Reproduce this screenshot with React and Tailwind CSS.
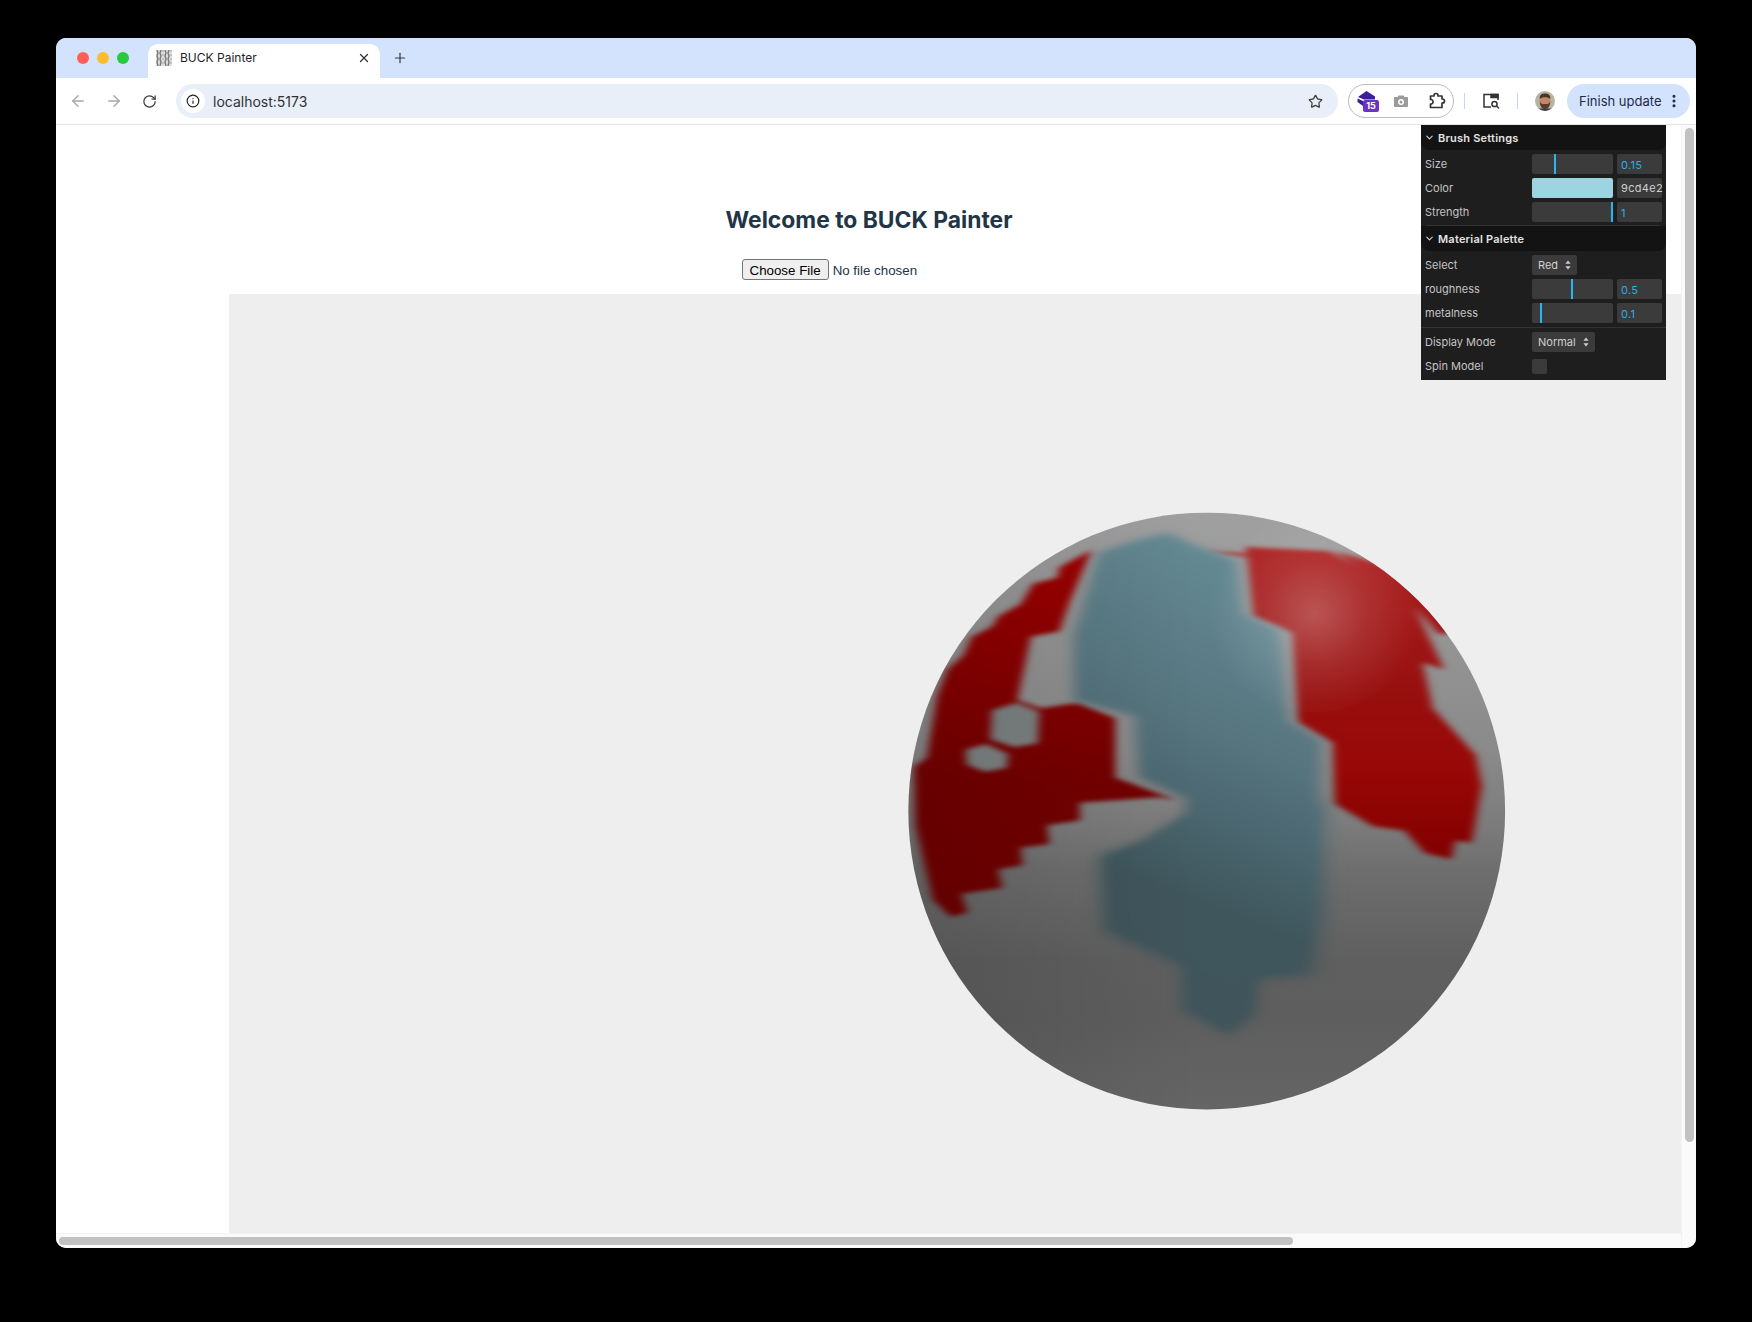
import { ArrowLeft, ArrowRight, ChevronDown, EllipsisVertical, Info, Plus, RotateCw, Star, X } from 'lucide-react';

function Globe() {
  return (
    <svg viewBox="0 0 1568 1568" className="block w-[640px] h-[640px] ml-[661px] mt-[206px]">
      <defs>
        <clipPath id="ball">
          <circle cx="776" cy="762" r="731" />
        </clipPath>
        <linearGradient id="grey" gradientUnits="userSpaceOnUse" x1="0" y1="30" x2="0" y2="1495">
          <stop offset="0" stopColor="#a0a0a0" />
          <stop offset="0.4" stopColor="#8a8a8a" />
          <stop offset="0.52" stopColor="#7c7c7c" />
          <stop offset="0.6" stopColor="#6e6e6e" />
          <stop offset="0.75" stopColor="#5f5f5f" />
          <stop offset="0.85" stopColor="#5e5e5e" />
          <stop offset="1" stopColor="#656565" />
        </linearGradient>
        <linearGradient id="redLeft" gradientUnits="userSpaceOnUse" x1="0" y1="120" x2="0" y2="1000">
          <stop offset="0" stopColor="#a00000" />
          <stop offset="0.65" stopColor="#740000" />
          <stop offset="1" stopColor="#700000" />
        </linearGradient>
        <linearGradient id="redRight" gradientUnits="userSpaceOnUse" x1="0" y1="120" x2="0" y2="880">
          <stop offset="0" stopColor="#ac2020" />
          <stop offset="0.45" stopColor="#981010" />
          <stop offset="0.7" stopColor="#980806" />
          <stop offset="1" stopColor="#820000" />
        </linearGradient>
        <linearGradient id="teal" gradientUnits="userSpaceOnUse" x1="1000" y1="200" x2="600" y2="1200">
          <stop offset="0" stopColor="#648a94" />
          <stop offset="0.4" stopColor="#56747e" />
          <stop offset="0.5" stopColor="#4f6c76" />
          <stop offset="0.76" stopColor="#3f565c" />
          <stop offset="1" stopColor="#3f555b" />
        </linearGradient>
        <linearGradient id="leftShade" gradientUnits="userSpaceOnUse" x1="50" y1="0" x2="760" y2="0">
          <stop offset="0" stopColor="#000000" stopOpacity="0.12" />
          <stop offset="1" stopColor="#000000" stopOpacity="0" />
        </linearGradient>
        <radialGradient id="shine" gradientUnits="userSpaceOnUse" cx="1040" cy="280" r="260">
          <stop offset="0" stopColor="#ffffff" stopOpacity="0.26" />
          <stop offset="0.5" stopColor="#ffffff" stopOpacity="0.1" />
          <stop offset="1" stopColor="#ffffff" stopOpacity="0" />
        </radialGradient>
        <filter id="soft" x="-10%" y="-10%" width="120%" height="120%" colorInterpolationFilters="sRGB">
          <feGaussianBlur stdDeviation="11 5" />
        </filter>
        <filter id="softer" x="-10%" y="-10%" width="120%" height="120%" colorInterpolationFilters="sRGB">
          <feGaussianBlur stdDeviation="17 8" />
        </filter>
        <filter id="softest" x="-20%" y="-20%" width="140%" height="140%" colorInterpolationFilters="sRGB">
          <feGaussianBlur stdDeviation="26 12" />
        </filter>
      </defs>
      <g clipPath="url(#ball)">
        <rect x="0" y="0" width="1568" height="1568" fill="url(#grey)" />
        <g filter="url(#soft)">
          <path
            fill="url(#redLeft)"
            d="M495 122 L440 250 L415 322 L345 335 L312 490 L370 510 L460 497 L552 535 L552 680 L700 735 L660 728 L465 742 L465 785 L385 797 L390 843 L320 852 L325 895 L265 905 L275 950 L175 965 L190 1010 L150 1022 L105 980 L62 800 L58 655 L90 630 L115 480 L140 415 L180 380 L200 335 L250 310 L265 285 L320 255 L350 205 L410 190 L415 165 Z"
          />
          <path fill="#7d8282" d="M250 515 L310 497 L365 518 L362 596 L305 606 L246 586 Z" />
          <path fill="#7d8282" d="M186 612 L235 598 L289 622 L286 656 L232 666 L188 648 Z" />
          <path
            fill="url(#redRight)"
            d="M770 125 L860 130 L875 135 L870 115 L1075 125 L1140 160 L1090 125 L1250 170 L1400 320 L1345 330 L1285 262 L1358 415 L1305 398 L1330 510 L1435 625 L1450 700 L1425 840 L1385 835 L1375 880 L1310 865 L1260 810 L1185 800 L1090 745 L1085 595 L1000 545 L985 325 L890 285 L875 140 Z"
          />
        </g>
        <path
          filter="url(#softest)"
          fill="url(#teal)"
          d="M800 740 L1060 740 L1062 1000 L1030 1165 L905 1170 L720 1140 L530 1060 L518 870 L620 840 Z"
        />
        <path
          filter="url(#softer)"
          fill="url(#teal)"
          d="M680 80 L770 120 L850 150 L868 280 L958 320 L975 540 L1055 590 L1050 735 L1030 1000 L1000 1150 L905 1170 L895 1260 L830 1312 L715 1250 L715 1130 L545 1050 L535 875 L620 840 L725 770 L725 730 L610 680 L600 530 L450 490 L450 330 L510 130 L600 100 Z"
        />
        <rect x="0" y="0" width="760" height="1568" fill="url(#leftShade)" />
        <ellipse cx="1040" cy="280" rx="260" ry="240" fill="url(#shine)" />
      </g>
    </svg>
  );
}

function Section({ title }) {
  return (
    <div className="h-[25px] flex items-center pl-[3px] gap-[3px] bg-[#131313] rounded-b-[8px] text-[#e4e4e4] font-semibold tracking-[0.02em]">
      <ChevronDown size={11} strokeWidth={2.5} className="text-[#cfcfcf]" />
      <span>{title}</span>
    </div>
  );
}

function Row({ label, children }) {
  return (
    <div className="h-[20px] flex items-center">
      <div className="w-[111px] pl-[4px] text-[#c4c4c4]">{label}</div>
      {children}
    </div>
  );
}

function Slider({ offset, value }) {
  return (
    <div className="flex gap-[4px]">
      <div className="w-[81px] h-[20px] rounded-[2px] bg-[#3b3b3b]">
        <div className={`h-[20px] w-[2px] bg-[#29b6f0] ${offset}`} />
      </div>
      <div className="w-[45px] h-[20px] rounded-[2px] bg-[#3b3b3b] pl-[4px] leading-[22px] text-[#2ab0e8] tracking-[0.03em]">{value}</div>
    </div>
  );
}

function SelectBox({ width, value }) {
  return (
    <div className={`h-[20px] rounded-[2px] bg-[#3b3b3b] flex items-center justify-between pl-[6px] pr-[6px] text-[#cfcfcf] ${width}`}>
      <span>{value}</span>
      <svg viewBox="0 0 6 10" className="w-[6px] h-[10px]">
        <path d="M3 0.5 L5.6 3.8 H0.4 Z M3 9.5 L0.4 6.2 H5.6 Z" fill="#cfcfcf" />
      </svg>
    </div>
  );
}

function Panel() {
  return (
    <div className="absolute top-[87px] right-[30px] w-[245px] h-[255px] bg-[#1e1e1e] text-[11px] font-['Inter',sans-serif] leading-[20px]">
      <Section title="Brush Settings" />
      <div className="flex flex-col gap-[4px] pt-[4px] pb-[3px]">
        <Row label="Size"><Slider offset="ml-[22px]" value="0.15" /></Row>
        <Row label="Color">
          <div className="flex gap-[4px]">
            <div className="w-[81px] h-[20px] rounded-[2px] bg-[#9cd4e2]" />
            <div className="w-[45px] h-[20px] rounded-[2px] bg-[#3b3b3b] pl-[4px] text-[#cfcfcf] tracking-[0.03em]">9cd4e2</div>
          </div>
        </Row>
        <Row label="Strength"><Slider offset="ml-[79px]" value="1" /></Row>
      </div>
      <div className="border-t border-[#333333] rounded-t-[8px]">
        <Section title="Material Palette" />
      </div>
      <div className="flex flex-col gap-[4px] pt-[4px] pb-[4px]">
        <Row label="Select"><SelectBox width="w-[45px]" value="Red" /></Row>
        <Row label="roughness"><Slider offset="ml-[39px]" value="0.5" /></Row>
        <Row label="metalness"><Slider offset="ml-[8px]" value="0.1" /></Row>
      </div>
      <div className="border-t border-[#333333] pt-[4px] flex flex-col gap-[4px]">
        <Row label="Display Mode"><SelectBox width="w-[63px]" value="Normal" /></Row>
        <Row label="Spin Model">
          <div className="w-[15px] h-[15px] rounded-[2px] bg-[#3b3b3b]" />
        </Row>
      </div>
    </div>
  );
}

function Favicon() {
  return (
    <svg viewBox="0 0 16 16" className="w-[16px] h-[16px]">
      <rect width="16" height="16" fill="#dcdcdc" />
      <path d="M1 0 L2 3 L1 6 L2 9 L1 12 L2 16 M5 0 L4 3 L5 6 L4 9 L5 12 L4 16 M9 0 L10 3 L9 6 L10 9 L9 12 L10 16 M13 0 L12 3 L13 6 L12 9 L13 12 L12 16" fill="none" stroke="#757575" strokeWidth="1.3" />
      <path d="M7 0 V16 M15 0 V16" stroke="#a8a8a8" strokeWidth="1" strokeDasharray="2 2" />
    </svg>
  );
}

function TabStrip() {
  return (
    <div className="h-[40px] bg-[#d3e3fd] flex shrink-0">
      <div className="w-[92px] flex items-center pl-[21px] gap-[8px]">
        <div className="w-[12px] h-[12px] rounded-full bg-[#ff5f57]" />
        <div className="w-[12px] h-[12px] rounded-full bg-[#febc2e]" />
        <div className="w-[12px] h-[12px] rounded-full bg-[#28c840]" />
      </div>
      <div className="mt-[6px] w-[232px] h-[34px] bg-white rounded-t-[10px] flex items-center pl-[8px] pr-[9px] pb-[6px] text-[12px] text-[#1f1f1f] font-['Inter',sans-serif]">
        <Favicon />
        <span className="ml-[8px] flex-1">BUCK Painter</span>
        <X size={14} strokeWidth={2.2} className="text-[#333333]" />
      </div>
      <div className="ml-[12px] w-[16px] flex items-center">
        <Plus size={16} strokeWidth={1.8} className="text-[#3c3c3c]" />
      </div>
    </div>
  );
}

function Toolbar() {
  return (
    <div className="h-[47px] shrink-0 bg-white border-b border-[#e2e4e8] flex items-start pt-[6px] font-['Inter',sans-serif]">
      <div className="w-[120px] h-[34px] flex items-center pl-[13px] gap-[18px] shrink-0">
        <ArrowLeft size={18} strokeWidth={1.8} className="text-[#a6a8ab]" />
        <ArrowRight size={18} strokeWidth={1.8} className="text-[#a6a8ab]" />
        <RotateCw size={15} strokeWidth={2} className="text-[#3c3c3c] ml-[1px]" />
      </div>
      <div className="w-[1162px] h-[34px] rounded-full bg-[#e9eff9] flex items-center pl-[5px] pr-[15px] shrink-0">
        <div className="w-[24px] h-[24px] rounded-full bg-white flex items-center justify-center">
          <Info size={14} strokeWidth={2} className="text-[#222222]" />
        </div>
        <span className="ml-[8px] flex-1 text-[14px] leading-[33px] text-[#303236]">localhost:5173</span>
        <Star size={15} strokeWidth={2} className="text-[#3c3c3c]" />
      </div>
      <div className="ml-[10px] w-[106px] h-[34px] rounded-full border border-[#bdbdbd] flex items-center pl-[8px] shrink-0">
        <div className="relative w-[20px] h-[20px] -mt-[3px]">
          <svg viewBox="0 0 20 20" className="w-[20px] h-[20px]">
            <path d="M9.5 1 L18 6.5 V9.5 H7 L1 7 Z M0.5 8.5 L6 11 V16 L0.5 12 Z" fill="#3c1f9c" />
          </svg>
          <div className="absolute left-[6px] top-[10px] w-[16px] h-[12px] rounded-[2px] bg-[#6b34c0] text-white text-[9px] font-bold leading-[12px] text-center">15</div>
        </div>
        <svg viewBox="0 0 16 16" className="w-[16px] h-[16px] ml-[16px]">
          <path fillRule="evenodd" d="M5.5 2.5 H10.5 L11.5 4 H14 A1 1 0 0 1 15 5 V13 A1 1 0 0 1 14 14 H2 A1 1 0 0 1 1 13 V5 A1 1 0 0 1 2 4 H4.5 Z M8 6 A3 3 0 1 0 8 12 A3 3 0 1 0 8 6 Z M8 7.5 A1.5 1.5 0 1 1 8 10.5 A1.5 1.5 0 1 1 8 7.5 Z" fill="#9a9a9a" />
        </svg>
        <svg viewBox="0 0 18 18" className="w-[18px] h-[18px] ml-[19px]" fill="none" stroke="#333333" strokeWidth="1.7" strokeLinejoin="round">
          <path d="M2.5 4 H6 V3.5 A2 2 0 0 1 10 3.5 V4 H14 V7 H14.5 A2 2 0 0 1 14.5 11 H14 V15.5 H2.5 V12 H3.5 A2.4 2.4 0 0 0 3.5 7.5 H2.5 Z" />
        </svg>
      </div>
      <div className="ml-[10px] mt-[9px] w-[1px] h-[16px] bg-[#c6d6ef] shrink-0" />
      <svg viewBox="0 0 18 18" className="w-[18px] h-[18px] ml-[17px] mt-[8px] shrink-0" fill="none" stroke="#333333" strokeWidth="1.5">
        <path d="M9 15 H2 V2.5 H16 V8" />
        <path d="M9 2.5 H16 V5.5 H9 Z" fill="#333333" />
        <circle cx="12.5" cy="12" r="2.6" />
        <path d="M14.5 14 L17 16.5" />
      </svg>
      <div className="ml-[17px] mt-[9px] w-[1px] h-[16px] bg-[#c6d6ef] shrink-0" />
      <div className="ml-[17px] mt-[7px] w-[20px] h-[20px] rounded-full overflow-hidden shrink-0">
        <svg viewBox="0 0 20 20" className="w-[20px] h-[20px]">
          <rect width="20" height="20" fill="#b9b4a2" />
          <ellipse cx="10" cy="10" rx="5.4" ry="7" fill="#c08a68" />
          <path d="M4.6 10 C5 16 7 18 10 18 C13 18 15 16 15.4 10 C14 13.5 12.5 13 10 13 C7.5 13 6 13.5 4.6 10 Z" fill="#5a3d2d" />
          <path d="M4.6 8 C4.6 3.5 7 2.5 10 2.5 C13 2.5 15.4 3.5 15.4 8 C13 5.5 7 5.5 4.6 8 Z" fill="#4a3428" />
          <rect x="1" y="17.5" width="18" height="3" fill="#3a3f48" />
        </svg>
      </div>
      <div className="ml-[12px] w-[123px] h-[34px] rounded-full bg-[#d3e3fd] flex items-center pl-[12px] shrink-0 text-[13px] text-[#1c2b4a]">
        <span className="w-[87px] leading-[35px] whitespace-nowrap">Finish update</span>
        <EllipsisVertical size={16} strokeWidth={2.6} className="text-[#1c2b4a]" />
      </div>
    </div>
  );
}

export default function App() {
  return (
    <div className="w-[1752px] h-[1322px] bg-black pt-[38px] pl-[56px] overflow-hidden">
      <div className="relative w-[1640px] h-[1210px] rounded-[10px] overflow-hidden flex flex-col bg-white">
        <TabStrip />
        <Toolbar />
        <div className="flex-1 flex min-h-0">
          <div className="w-[1625px] flex flex-col">
            <div className="flex-1 pt-[80px] min-h-0">
              <h1 className="pl-[1px] text-[22.85px] leading-[30px] font-bold text-[#213547] text-center font-['Inter',sans-serif]">Welcome to BUCK Painter</h1>
              <div className="mt-[24px] h-[21px] flex justify-center">
                <input
                  type="file"
                  className="w-[253px] -ml-[1px] text-[13.33px] leading-[21px] text-[#213547] font-['Liberation_Sans',sans-serif] file:h-[21px] file:px-[7px] file:bg-[#efefef] file:text-black file:border file:border-[#767676] file:rounded-[3px] file:mr-[4px]"
                />
              </div>
              <div className="mt-[14px] ml-[173px] w-[1452px] h-[939px] bg-[#eeeeee] overflow-hidden">
                <Globe />
              </div>
            </div>
            <div className="h-[15px] bg-[#fafafa] border-t border-[#f2f2f2] pl-[3px] pt-[3px]">
              <div className="w-[1234px] h-[8px] rounded-full bg-[#c1c1c1]" />
            </div>
          </div>
          <div className="w-[15px] bg-[#fafafa] border-l border-[#f2f2f2] pl-[3px] pt-[3px]">
            <div className="w-[9px] h-[1014px] rounded-full bg-[#c1c1c1]" />
          </div>
        </div>
        <Panel />
      </div>
    </div>
  );
}
